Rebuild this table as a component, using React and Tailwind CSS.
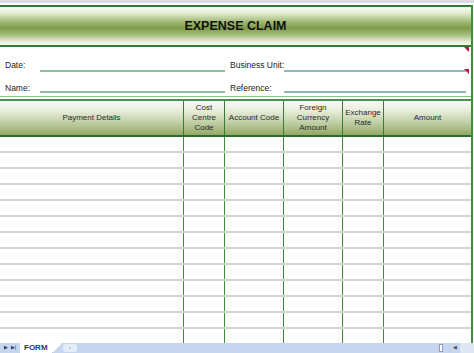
import React from 'react';

const cols = [
  { label: ['Payment Details'], w: 'w-[184px]' },
  { label: ['Cost', 'Centre', 'Code'], w: 'w-[41px]' },
  { label: ['Account Code'], w: 'w-[59px]' },
  { label: ['Foreign', 'Currency', 'Amount'], w: 'w-[59px]' },
  { label: ['Exchange', 'Rate'], w: 'w-[41px]' },
  { label: ['Amount'], w: 'flex-1' },
];

const rows = Array.from({ length: 13 });

const Flag = () => (
  <span className="absolute right-[2px] top-0 h-0 w-0 border-l-[5px] border-t-[5px] border-l-transparent border-t-[#c0123a]" />
);

const App = () => {
  return (
    <div className="flex h-[353px] w-[474px] flex-col overflow-hidden bg-white font-['Liberation_Sans',Arial,sans-serif] text-[#222]">
      <div className="h-[3px] shrink-0 bg-[#d9dee6]" />
      <div className="h-[2px] shrink-0 bg-white" />
      <div className="flex min-h-0 w-[473px] flex-1 flex-col border-r-2 border-[#3f8f3f]">
        <div className="h-[2px] shrink-0 bg-[#2e7d32]" />
        <div className="flex h-[38px] shrink-0 items-center justify-center bg-[linear-gradient(to_bottom,#fdfdf8_0%,#dfe8cc_18%,#a3bb78_38%,#7f9c48_55%,#a5bd7c_74%,#e4ecd6_90%,#f7f9f1_100%)]">
          <span className="text-[12.5px] font-bold text-[#111]">EXPENSE CLAIM</span>
        </div>
        <div className="h-[2px] shrink-0 bg-[#2e7d32]" />

        <div className="relative flex h-[49px] shrink-0 flex-col whitespace-nowrap text-[8.5px] leading-[10px]">
          <div className="flex h-[27px] items-end">
            <span className="w-[40px] pl-[5px] pb-[4px]">Date:</span>
            <span className="mb-[2px] w-[185px] border-b-2 border-[#8fc09a]" />
            <span className="w-[59px] pl-[5px] pb-[4px]">Business Unit:</span>
            <span className="relative mb-[2px] w-[182px] border-b-2 border-[#8fb8b8]">
              <span className="absolute -right-[3px] -top-[1px] h-0 w-0 border-l-[5px] border-t-[5px] border-l-transparent border-t-[#c0123a]" />
            </span>
          </div>
          <div className="flex h-[22px] items-end">
            <span className="w-[40px] pl-[5px] pb-[3px]">Name:</span>
            <span className="mb-[3px] w-[185px] border-b-2 border-[#8fc09a]" />
            <span className="w-[59px] pl-[5px] pb-[3px]">Reference:</span>
            <span className="mb-[3px] w-[182px] border-b-2 border-[#8fb8b8]" />
          </div>
          <Flag />
        </div>

        <div className="h-[1px] shrink-0 bg-[#8cc08c]" />
        <div className="h-[2px] shrink-0 bg-white" />
        <div className="flex h-[38px] shrink-0 border-y-2 border-y-[#2e6b2e] border-t-[#4d8f4d] bg-[linear-gradient(to_bottom,#fbfcf7_0%,#e6ecd8_30%,#b8c99a_70%,#91a864_100%)] text-[8px] leading-[10px] text-[#2a2a2a]">
          {cols.map((c, i) => (
            <div
              key={i}
              className={`${c.w} flex flex-col items-center justify-center text-center ${i < cols.length - 1 ? 'border-r border-[#3a7a3a]' : ''}`}
            >
              {c.label.map(l => (
                <span key={l}>{l}</span>
              ))}
            </div>
          ))}
        </div>

        <div className="min-h-0 flex-1 overflow-hidden">
          {rows.map((_, r) => (
            <div key={r} className="flex h-[16px] border-b-2 border-[#ccdacb]">
              {cols.map((c, i) => (
                <div
                  key={i}
                  className={`${c.w} ${i < cols.length - 1 ? 'border-r border-[#3f8f3f]' : ''}`}
                />
              ))}
            </div>
          ))}
        </div>
      </div>

      <div className="flex h-[10px] shrink-0 items-center bg-[#c5d6ee] text-[7px]">
        <span className="flex w-[20px] items-center justify-center gap-[3px] text-[5px] text-[#2a3b66]">
          <span>▶</span>
          <span>▶|</span>
        </span>
        <span className="flex h-[10px] items-center bg-white px-[4px] text-[8px] font-bold text-[#1f3a6b]">FORM</span>
        <span className="h-[10px] w-[10px] bg-[linear-gradient(to_bottom_right,white_50%,#c5d6ee_50%)]" />
        <span className="ml-[1px] flex h-[8px] w-[14px] items-center justify-center rounded-[2px] bg-[#e3ecf8] text-[6px] text-[#889]">◔</span>
        <span className="flex-1" />
        <span className="mr-[10px] h-[8px] w-[4px] border border-[#8aa0c0] bg-white" />
        <span className="mr-[3px] text-[5px] text-[#445]">◀</span>
        <span className="h-[10px] w-[14px] bg-[#dde6f3]" />
      </div>
    </div>
  );
};

export default App;
